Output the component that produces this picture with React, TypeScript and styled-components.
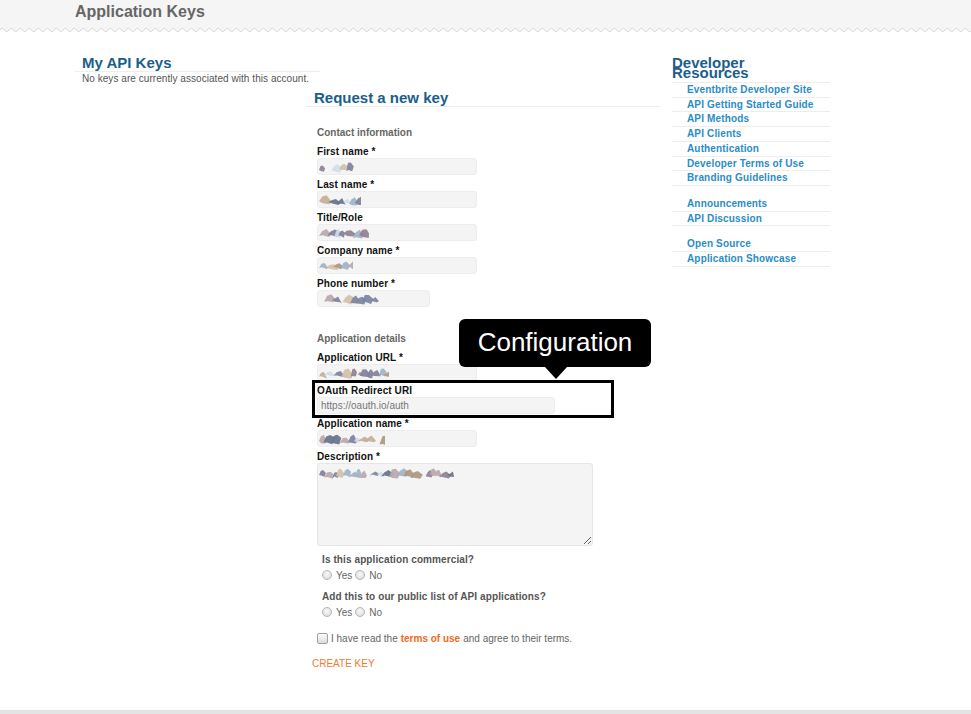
import React from "react";
import styled, { createGlobalStyle } from "styled-components";

const GlobalStyle = createGlobalStyle`
  html, body { margin: 0; padding: 0; background: #fff; }
  body { font-family: "Liberation Sans", Arial, sans-serif; }
  * { box-sizing: border-box; }
`;

const Page = styled.div`
  min-height: 100vh;
  display: flex;
  flex-direction: column;
`;

const Header = styled.header`
  background: #f5f5f5;
`;

const HeaderInner = styled.div`
  height: 28px;
  padding: 0 0 4px 75px;
  display: flex;
  align-items: center;
`;

const PageTitle = styled.h1`
  margin: 0;
  font-size: 16px;
  font-weight: bold;
  color: #666;
  line-height: 18px;
`;

const WaveSvg = styled.svg`
  display: block;
  width: 100%;
  height: 6px;
`;

const Content = styled.main`
  display: grid;
  grid-template-columns: 585px 158px;
  column-gap: 12px;
  padding: 20px 0 0 75px;
`;

const MainCol = styled.div`
  display: flex;
  flex-direction: column;
`;

const KeysSection = styled.section`
  width: 245px;
`;

const SectionHeading = styled.h2`
  margin: 0;
  font-size: 15px;
  line-height: 17px;
  font-weight: bold;
  color: #1b5e8a;
  padding-left: ${(p: { $inset: number }) => p.$inset}px;
  border-bottom: 1px solid #eee;
`;

const Note = styled.p`
  margin: 1px 0 0 7px;
  font-size: 10px;
  line-height: 12px;
  color: #555;
  letter-spacing: 0.05px;
`;

const RequestSection = styled.section`
  margin-left: 231px;
  margin-top: 4px;
  width: 354px;
`;

const Form = styled.div`
  padding-left: 11px;
  display: flex;
  flex-direction: column;
`;

const GroupTitle = styled.h3`
  margin: ${(p: { $top: number }) => p.$top}px 0 7px 0;
  font-size: 10px;
  line-height: 12px;
  font-weight: bold;
  color: #666;
`;

const Field = styled.div`
  position: relative;
  margin-bottom: 4px;
  display: flex;
  flex-direction: column;
  align-items: flex-start;
`;

const Label = styled.label`
  font-size: 10px;
  line-height: 12px;
  font-weight: bold;
  color: #111;
  letter-spacing: 0.1px;
`;

const InputBox = styled.div<{ $w: number }>`
  width: ${(p) => p.$w}px;
  height: 17px;
  background: #f4f4f4;
  border: 1px solid #ededed;
  border-radius: 3px;
  display: flex;
  align-items: center;
  padding-left: 1px;
`;

const Placeholder = styled.span`
  font-size: 10px;
  color: #777;
  padding-left: 2px;
`;

const TextArea = styled.div`
  width: 276px;
  height: 83px;
  background: #f4f4f4;
  border: 1px solid #e6e6e6;
  border-radius: 3px;
  resize: both;
  overflow: hidden;
  padding: 1px 0 0 1px;
`;

const Highlight = styled.div`
  position: absolute;
  left: -5px;
  top: -5px;
  width: 302px;
  height: 38px;
  border: 3px solid #000;
  pointer-events: none;
`;

const Tooltip = styled.div`
  position: absolute;
  left: 142px;
  top: -66px;
  width: 192px;
  height: 48px;
  background: #000;
  border-radius: 6px;
  color: #fff;
  font-size: 26px;
  line-height: 46px;
  text-align: center;
  font-family: "Liberation Sans", Arial, sans-serif;
  &::after {
    content: "";
    position: absolute;
    left: 86px;
    top: 100%;
    border-left: 11px solid transparent;
    border-right: 11px solid transparent;
    border-top: 12px solid #000;
  }
`;

const Question = styled.div`
  padding-left: 5px;
  margin-top: ${(p: { $top: number }) => p.$top}px;
`;

const QuestionText = styled.div`
  font-size: 10px;
  line-height: 12px;
  font-weight: bold;
  color: #555;
  letter-spacing: 0.1px;
`;

const RadioRow = styled.div`
  display: flex;
  align-items: center;
  margin-top: 3px;
  height: 12px;
  font-size: 10px;
  color: #666;
`;

const Radio = styled.span`
  width: 10px;
  height: 10px;
  border-radius: 50%;
  border: 1px solid #b5b5b5;
  background: radial-gradient(circle at 50% 40%, #fafafa, #d6d6d6);
  margin-right: 4px;
`;

const RadioText = styled.span`
  margin-right: 3px;
`;

const AgreeRow = styled.div`
  display: flex;
  align-items: center;
  margin-top: 14px;
  font-size: 10px;
  color: #666;
  height: 12px;
`;

const CheckBox = styled.span`
  width: 11px;
  height: 11px;
  border: 1px solid #a0a0a0;
  border-radius: 2px;
  background: linear-gradient(#fdfdfd, #dcdcdc);
  margin-right: 3px;
`;

const OrangeLink = styled.a`
  color: #f26a21;
  font-weight: bold;
  text-decoration: none;
  margin: 0 3px;
`;

const CreateKey = styled.a`
  display: block;
  margin: 14px 0 0 -5px;
  font-size: 10px;
  line-height: 12px;
  color: #f47a2c;
  text-decoration: none;
`;

const Sidebar = styled.aside`
  padding-top: 4px;
`;

const SideHeading = styled.h2`
  margin: 0;
  font-size: 15px;
  line-height: 10px;
  font-weight: bold;
  color: #1b5e8a;
  padding-bottom: 4px;
`;

const SideRule = styled.div`
  border-top: 1px solid #eee;
`;

const LinkList = styled.ul`
  list-style: none;
  margin: ${(p: { $top: number }) => p.$top}px 0 0 0;
  padding: 0;
`;

const LinkItem = styled.li`
  border-bottom: 1px solid #eee;
  padding-left: 15px;
  font-size: 10px;
  line-height: 13.7px;
  font-weight: bold;
  letter-spacing: 0.15px;
`;

const SideLink = styled.a`
  color: #2a8cc8;
  text-decoration: none;
`;

const Footer = styled.footer`
  margin-top: auto;
  height: 4px;
  background: #e4e4e4;
`;

const palette = ["#7f7f9c", "#ad9682", "#c4ae98", "#66718c", "#d3bfa8", "#9fb2c6", "#cddcee", "#8f7f94", "#b8a6ad", "#7a86a0"];

function Smudge({ width, seed, height = 12 }: { width: number; seed: number; height?: number }) {
  let s = (seed * 7919 + 104729) % 233280;
  const rnd = () => {
    s = (s * 9301 + 49297) % 233280;
    return s / 233280;
  };
  const shapes: React.ReactNode[] = [];
  let x = 0;
  let i = 0;
  while (x < width - 5) {
    const w = 6 + rnd() * 7;
    if (rnd() < 0.08) {
      x += w * 0.6;
      continue;
    }
    const top = 1 + rnd() * 4;
    const bottom = height - rnd() * 3;
    const pts = [
      [x, bottom - rnd() * 3],
      [x + w * 0.25, top + rnd() * 3],
      [x + w * 0.6, top],
      [x + w, top + 2 + rnd() * 5],
      [x + w * 0.8, bottom],
      [x + w * 0.3, bottom - rnd() * 2],
    ]
      .map((p) => p.map((n) => Math.min(Math.max(n, 0), width).toFixed(1)).join(","))
      .join(" ");
    shapes.push(
      <polygon key={i} points={pts} fill={palette[Math.floor(rnd() * palette.length)]} opacity={0.92} />
    );
    x += w * (0.55 + rnd() * 0.3);
    i++;
  }
  return (
    <svg width={width} height={height} viewBox={`0 0 ${width} ${height}`}>
      {shapes}
    </svg>
  );
}

function Wave() {
  return (
    <WaveSvg preserveAspectRatio="none">
      <defs>
        <pattern id="wave" width="9" height="6" patternUnits="userSpaceOnUse">
          <path d="M0 0 H9 V1.5 Q6.75 5.5 4.5 1.5 Q2.25 -2.5 0 1.5 Z" fill="#f5f5f5" />
          <path d="M0 2 Q2.25 -1.5 4.5 2 Q6.75 5.5 9 2" fill="none" stroke="#d4d4d4" strokeWidth="1" />
        </pattern>
      </defs>
      <rect x="0" y="0" width="100%" height="6" fill="url(#wave)" />
    </WaveSvg>
  );
}

const contactFields = [
  { label: "First name *", w: 160, smudge: 36, seed: 3 },
  { label: "Last name *", w: 160, smudge: 42, seed: 7 },
  { label: "Title/Role", w: 160, smudge: 50, seed: 11 },
  { label: "Company name *", w: 160, smudge: 34, seed: 5 },
  { label: "Phone number *", w: 113, smudge: 60, seed: 13 },
];

const sideGroups = [
  [
    "Eventbrite Developer Site",
    "API Getting Started Guide",
    "API Methods",
    "API Clients",
    "Authentication",
    "Developer Terms of Use",
    "Branding Guidelines",
  ],
  ["Announcements", "API Discussion"],
  ["Open Source", "Application Showcase"],
];

function YesNo() {
  return (
    <RadioRow>
      <Radio />
      <RadioText>Yes</RadioText>
      <Radio />
      <RadioText>No</RadioText>
    </RadioRow>
  );
}

export default function App() {
  return (
    <Page>
      <GlobalStyle />
      <Header>
        <HeaderInner>
          <PageTitle>Application Keys</PageTitle>
        </HeaderInner>
      </Header>
      <Wave />
      <Content>
        <MainCol>
          <KeysSection>
            <SectionHeading $inset={7}>My API Keys</SectionHeading>
            <Note>No keys are currently associated with this account.</Note>
          </KeysSection>
          <RequestSection>
            <SectionHeading $inset={8}>Request a new key</SectionHeading>
            <Form>
              <GroupTitle $top={20}>Contact information</GroupTitle>
              {contactFields.map((f) => (
                <Field key={f.label}>
                  <Label>{f.label}</Label>
                  <InputBox $w={f.w}>
                    <Smudge width={f.smudge} seed={f.seed} />
                  </InputBox>
                </Field>
              ))}
              <GroupTitle $top={22}>Application details</GroupTitle>
              <Field>
                <Label>Application URL *</Label>
                <InputBox $w={160}>
                  <Smudge width={70} seed={17} />
                </InputBox>
              </Field>
              <Field>
                <Label>OAuth Redirect URI</Label>
                <InputBox $w={238}>
                  <Placeholder>https://oauth.io/auth</Placeholder>
                </InputBox>
                <Highlight />
                <Tooltip>Configuration</Tooltip>
              </Field>
              <Field>
                <Label>Application name *</Label>
                <InputBox $w={160}>
                  <Smudge width={66} seed={21} />
                </InputBox>
              </Field>
              <Field>
                <Label>Description *</Label>
                <TextArea>
                  <Smudge width={135} seed={29} />
                </TextArea>
              </Field>
              <Question $top={4}>
                <QuestionText>Is this application commercial?</QuestionText>
                <YesNo />
              </Question>
              <Question $top={10}>
                <QuestionText>Add this to our public list of API applications?</QuestionText>
                <YesNo />
              </Question>
              <AgreeRow>
                <CheckBox />
                I have read the<OrangeLink href="#">terms of use</OrangeLink>and agree to their terms.
              </AgreeRow>
              <CreateKey href="#">CREATE KEY</CreateKey>
            </Form>
          </RequestSection>
        </MainCol>
        <Sidebar>
          <SideHeading>
            Developer
            <br />
            Resources
          </SideHeading>
          <SideRule />
          {sideGroups.map((g, gi) => (
            <LinkList key={gi} $top={gi === 0 ? 0 : 11}>
              {g.map((item) => (
                <LinkItem key={item}>
                  <SideLink href="#">{item}</SideLink>
                </LinkItem>
              ))}
            </LinkList>
          ))}
        </Sidebar>
      </Content>
      <Footer />
    </Page>
  );
}
